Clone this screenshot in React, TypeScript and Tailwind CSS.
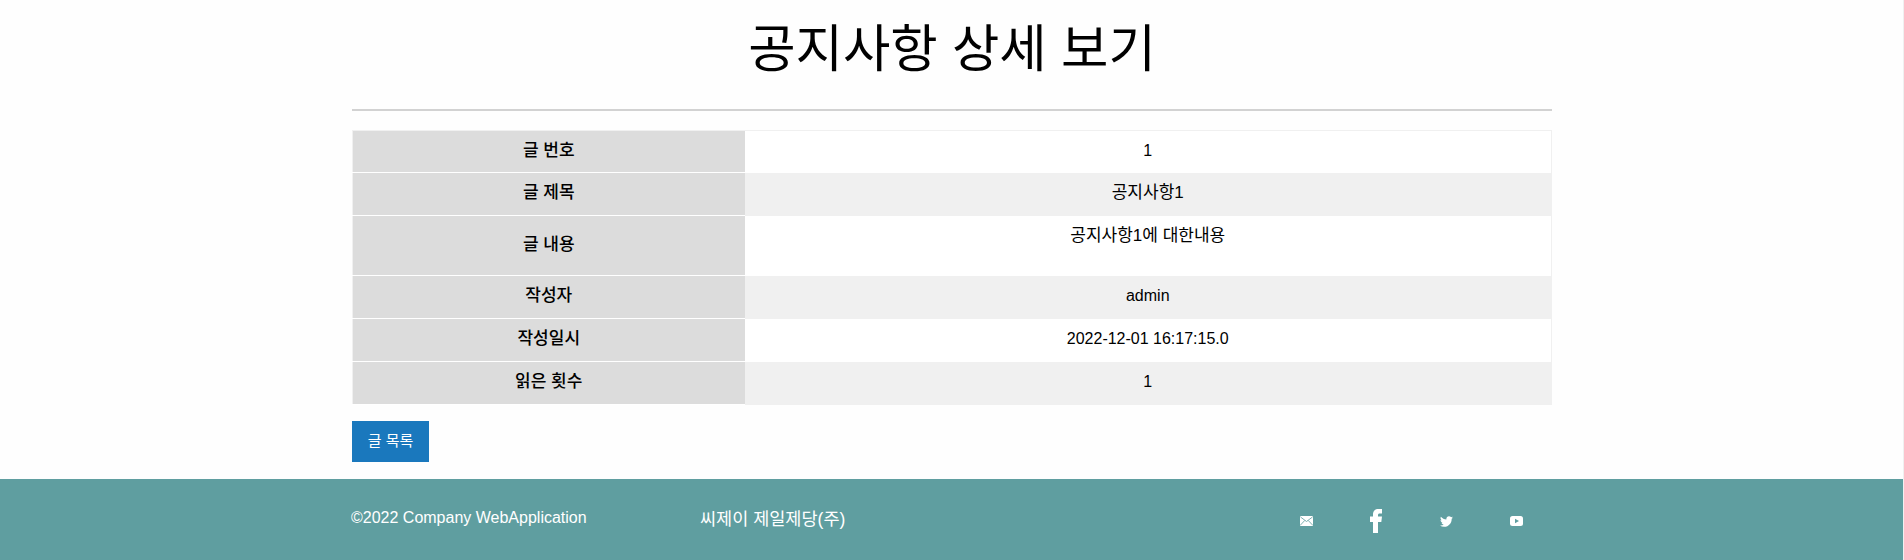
import { FaTwitter } from 'react-icons/fa'

const rows = [
  { label: '글 번호', value: '1', height: 'h-[42px]' },
  { label: '글 제목', value: '공지사항1', height: 'h-[43px]', korean: true },
  { label: '글 내용', value: '공지사항1에 대한내용', height: 'h-[60px]', top: true, korean: true },
  { label: '작성자', value: 'admin', height: 'h-[43px]' },
  { label: '작성일시', value: '2022-12-01 16:17:15.0', height: 'h-[43px]' },
  { label: '읽은 횟수', value: '1', height: 'h-[43px]' },
]

function MailIcon() {
  return (
    <svg width="13" height="10" viewBox="0 0 13 10">
      <rect width="13" height="10" rx="1" fill="#fff" />
      <path d="M0.5 1 L6.5 5.5 L12.5 1 M0.5 9 L4.8 4.4 M12.5 9 L8.2 4.4" stroke="#5f9ea0" strokeWidth="0.8" fill="none" />
    </svg>
  )
}

function FacebookIcon() {
  return (
    <svg width="12" height="24" viewBox="0 0 12 24" fill="#fff">
      <path d="M3 24 V13 H0 V7.5 H3 V5.5 C3 2 5 0 8.5 0 H12 V4.5 H9.8 C8.5 4.5 8 5 8 6.2 V7.5 H12 L11.3 13 H8 V24 Z" />
    </svg>
  )
}

function YoutubeIcon() {
  return (
    <svg width="13" height="10" viewBox="0 0 13 10">
      <rect width="13" height="10" rx="2.5" fill="#fff" />
      <path d="M5 2.7 L9 5 L5 7.3 Z" fill="#5f9ea0" />
    </svg>
  )
}

export default function App() {
  return (
    <div className="h-[560px] flex flex-col bg-[#fefefe] border-r border-[#f0f0f0] text-black font-['Liberation_Sans','Noto_Sans_CJK_KR',sans-serif] overflow-hidden">
      <main className="w-[1200px] ml-[352px] flex-1">
        <h1 className="text-[51.5px] leading-[60px] text-center pt-[19px] pb-[30px] font-normal border-b-2 border-[#d2d2d2]">공지사항 상세 보기</h1>
        <table className="w-full mt-[19px] border-collapse text-base border border-[#f0f0f0]">
          <tbody>
            {rows.map((row, i) => (
              <tr key={row.label} className={row.height + (i % 2 === 1 ? ' bg-[#f0f0f0]' : ' bg-white')}>
                <th className="w-[392px] bg-[#dcdcdc] border-b border-white text-[17px] font-medium text-center p-0 pb-[2px]">{row.label}</th>
                <td className={'text-center p-0 ' + (row.korean ? 'text-[17px] ' : '') + (row.top ? 'align-top pt-[7px]' : 'pb-[2px]')}>{row.value}</td>
              </tr>
            ))}
          </tbody>
        </table>
        <button className="block mt-[16px] w-[77px] h-[41px] bg-[#1a78bd] text-white text-[15px]">글 목록</button>
      </main>
      <footer className="h-[81px] bg-[#5f9ea0] text-white">
        <div className="w-[1200px] ml-[351px] flex items-start">
          <div className="w-[349px] shrink-0 pt-[27px] leading-[24px]">©2022 Company WebApplication</div>
          <div className="w-[571px] shrink-0 pt-[28px] leading-[24px] text-[17.5px]">씨제이 제일제당(주)</div>
          <div className="flex items-center mt-[30px] shrink-0">
            <div className="w-[70px] flex justify-center"><MailIcon /></div>
            <div className="w-[70px] flex justify-center"><FacebookIcon /></div>
            <div className="w-[70px] flex justify-center"><FaTwitter size={13} /></div>
            <div className="w-[70px] flex justify-center"><YoutubeIcon /></div>
          </div>
        </div>
      </footer>
    </div>
  )
}
